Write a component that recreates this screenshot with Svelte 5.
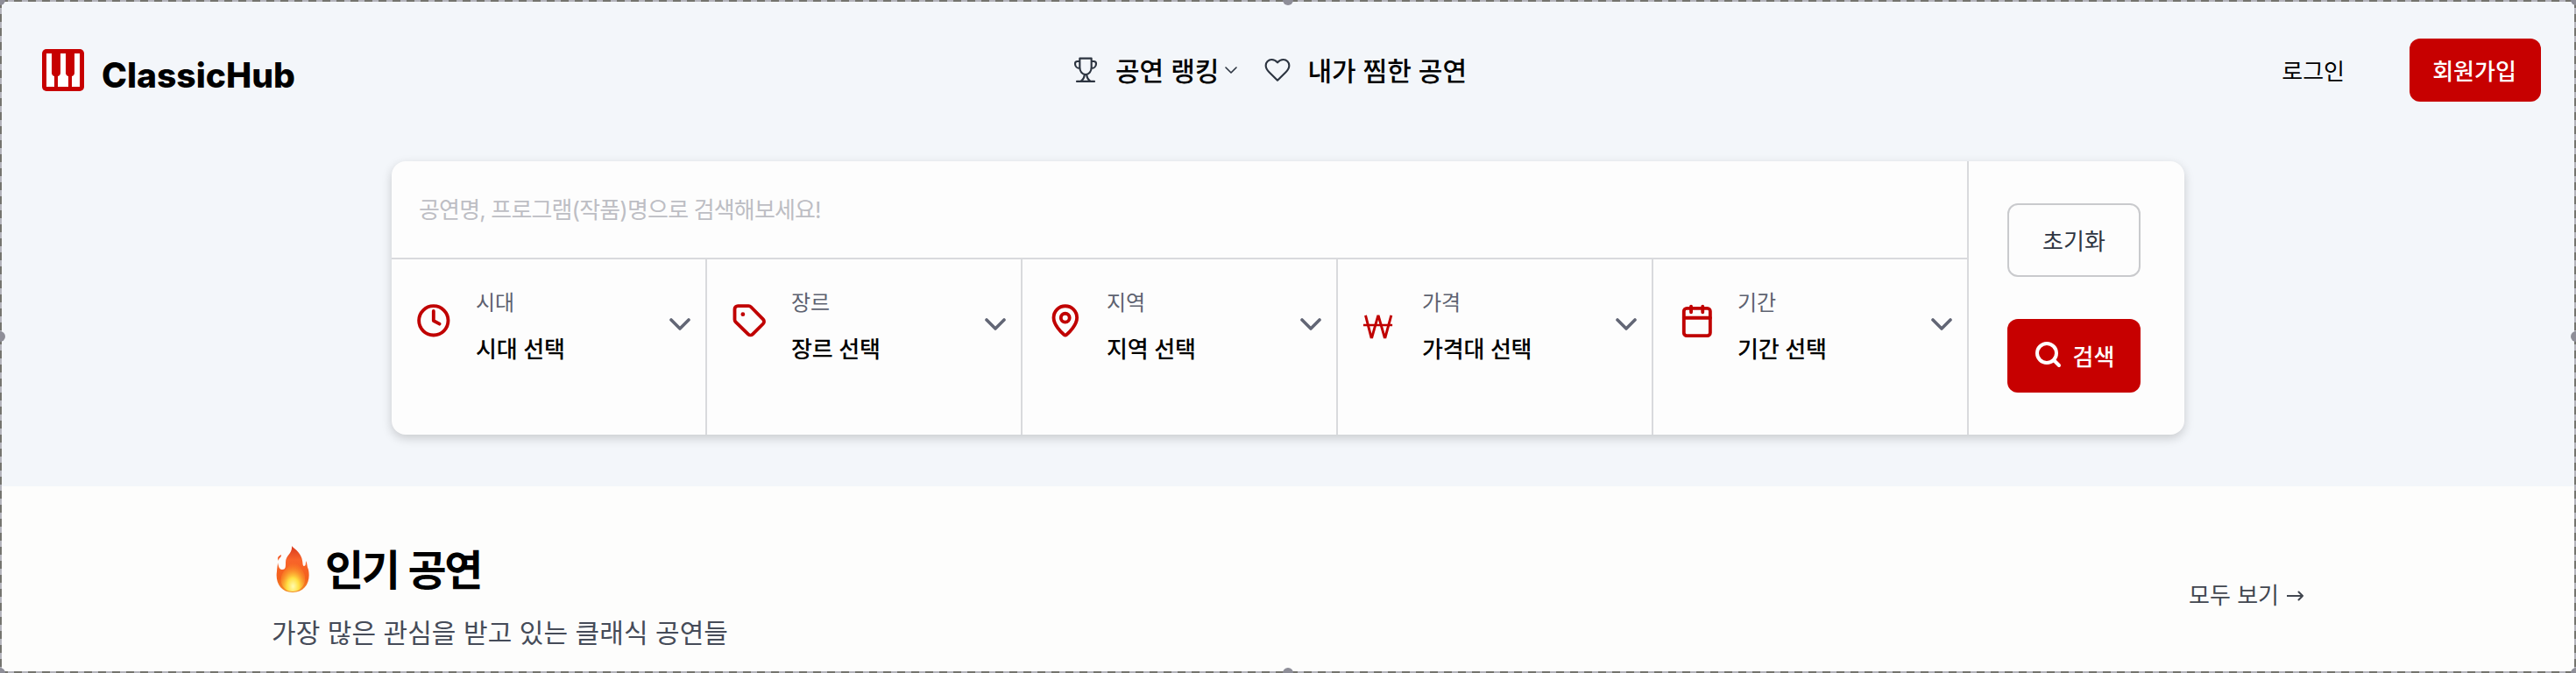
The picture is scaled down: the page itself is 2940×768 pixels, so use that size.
<script lang="ts">
  type IconName = 'clock' | 'tag' | 'pin' | 'won' | 'calendar';

  interface Filter {
    icon: IconName;
    label: string;
    value: string;
  }

  const filters: Filter[] = [
    { icon: 'clock', label: '시대', value: '시대 선택' },
    { icon: 'tag', label: '장르', value: '장르 선택' },
    { icon: 'pin', label: '지역', value: '지역 선택' },
    { icon: 'won', label: '가격', value: '가격대 선택' },
    { icon: 'calendar', label: '기간', value: '기간 선택' },
  ];

  const handles = ['nw', 'n', 'ne', 'w', 'e', 'sw', 's', 'se'];

  let keyword = $state('');
</script>

<div class="page">
  <div class="hero">
    <header>
      <a class="logo" href="#top">
        <svg width="48" height="48" viewBox="0 0 48 48">
          <rect width="48" height="48" rx="5" fill="#c70000" />
          <path
            d="M5 5h6v22q0 3 3 4v12H5zM21 5h6v22q0 3 3 4v12H18V31q3-1 3-4zM37 5h6v38h-9V31q3-1 3-4z"
            fill="#fff"
          />
        </svg>
        <span>ClassicHub</span>
      </a>

      <nav>
        <a class="rank" href="#ranking">
          <svg class="line" width="32" height="32" viewBox="0 0 24 24">
            <path d="M7 2h10v7.500c0 3.500-2 6.300-5 6.300s-5-2.800-5-6.300zM7 4.500H5a2 2 0 0 0-2 2c0 2.500 1.800 4 4 4M17 4.500h2a2 2 0 0 1 2 2c0 2.500-1.800 4-4 4M11 16c0 2.500-1 4-3 5.500M13 16c0 2.500 1 4 3 5.500M4.500 21.700h15" />
          </svg>
          <span>공연 랭킹</span>
          <svg class="caret" width="14" height="8" viewBox="0 0 14 8">
            <path d="M1 1l6 6 6-6" />
          </svg>
        </a>
        <a class="liked" href="#liked">
          <svg class="line" width="32" height="32" viewBox="0 0 24 24">
            <path d="M12 20.800l-7-7C2.500 11.300 2 9.800 2 8a5 5 0 0 1 5-5c2.200 0 3.700 1 5 2.500C13.300 4 14.800 3 17 3a5 5 0 0 1 5 5c0 1.800-.5 3.300-3 5.800z" />
          </svg>
          <span>내가 찜한 공연</span>
        </a>
      </nav>

      <div class="account">
        <a class="login" href="#login">로그인</a>
        <button type="button" class="primary signup">회원가입</button>
      </div>
    </header>

    <form class="search">
      <div class="fields">
        <input type="text" placeholder="공연명, 프로그램(작품)명으로 검색해보세요!" bind:value={keyword} />
        <div class="filters">
          {#each filters as filter (filter.icon)}
            <div class="filter">
              <svg class="icon" width="44" height="44" viewBox="0 0 24 24">
                {#if filter.icon === 'clock'}
                  <circle cx="11.900" cy="11.900" r="9.100" />
                  <path d="M11.900 6V12l3.700 2" />
                {:else if filter.icon === 'tag'}
                  <path d="M5 2.800h6.700a2 2 0 0 1 1.400.6l7.600 7.700a2 2 0 0 1 0 2.800l-6.500 6.500a2 2 0 0 1-2.800 0l-7.800-7.700A2 2 0 0 1 3 11.300V4.800a2 2 0 0 1 2-2z" />
                  <circle class="dot" cx="8.100" cy="8" r="1.300" />
                {:else if filter.icon === 'pin'}
                  <path d="M19.700 10.100c0 4.500-4.800 9.200-6.500 10.600a1.200 1.200 0 0 1-1.500 0c-1.700-1.400-6.500-6.100-6.500-10.600a7.250 7.250 0 0 1 14.500 0z" />
                  <circle cx="12.400" cy="10.200" r="2.700" />
                {:else if filter.icon === 'won'}
                  <path class="won" d="M3 8.700l3.500 13.500h.5l3.700-13h.4l3.700 13h.5L19 8.700" />
                  <path class="bar" d="M1.600 14.700h18.100" />
                {:else}
                  <rect x="4.800" y="4.300" width="16.400" height="17" rx="1.800" />
                  <path d="M9.300 3.100v3.600M16.500 3.100v3.600M4.800 10.200h16.400" />
                {/if}
              </svg>
              <div class="choice">
                <span class="label">{filter.label}</span>
                <span class="value">{filter.value}</span>
              </div>
              <svg class="chevron" width="24" height="14" viewBox="0 0 24 14">
                <path d="M2 2l10 10L22 2" />
              </svg>
            </div>
          {/each}
        </div>
      </div>
      <div class="actions">
        <button type="reset" class="reset">초기화</button>
        <button type="button" class="primary submit">
          <svg width="32" height="32" viewBox="0 0 32 32">
            <circle cx="15" cy="14" r="11" />
            <path d="M23 22l6 6" />
          </svg>
          <span>검색</span>
        </button>
      </div>
    </form>
  </div>

  <section>
    <div>
      <h2>
        <svg width="40" height="56" viewBox="0 0 40 56">
          <defs>
            <linearGradient id="flame" x1="0" y1="0" x2="0" y2="1">
              <stop offset="0" stop-color="#d9381e" />
              <stop offset="0.3" stop-color="#f8642a" />
              <stop offset="0.7" stop-color="#f4611c" />
              <stop offset="1" stop-color="#f2912a" />
            </linearGradient>
            <radialGradient id="core" cx="0.5" cy="0.85" r="0.7">
              <stop offset="0" stop-color="#fffbb0" />
              <stop offset="0.35" stop-color="#ffe043" />
              <stop offset="1" stop-color="#ff8a25" stop-opacity="0" />
            </radialGradient>
          </defs>
          <path
            d="M18 1c1 2 8 5 11 13 2 5 1 10 3 10 2 0 2-3 2-6 2 3 1 6 3 10 3 14-4 26-18 26S-1 42 1 30c0-4 1-7 1-10 1 5 2 8 5 8 4 0 4-3 4-8 0-9 8-10 7-19zM6 11c0 4-3 3-3 7-2-3-1-5 3-7z"
            fill="url(#flame)"
          />
          <path d="M19 14c3 7 10 10 13 18 4 10-2 21-13 21S3 42 7 33c3-6 11-10 12-19z" fill="url(#core)" />
        </svg>
        <span>인기 공연</span>
      </h2>
      <p>가장 많은 관심을 받고 있는 클래식 공연들</p>
    </div>
    <a class="more" href="#all">
      모두 보기
      <svg width="20" height="12" viewBox="0 0 20 12">
        <path d="M0 6h18M13.500 1.500L18 6l-4.500 4.500" />
      </svg>
    </a>
  </section>

  <div class="frame">
    {#each handles as handle (handle)}
      <i class={handle}></i>
    {/each}
  </div>
</div>

<style>
  :global(body) {
    margin: 0;
    overflow: hidden;
  }

  .page {
    position: relative;
    height: 768px;
    overflow: hidden;
    background: #fdfdfc;
    color: #000;
    font-family: Inter, 'Noto Sans CJK KR', sans-serif;
  }

  .page * {
    box-sizing: border-box;
  }

  svg {
    display: block;
    flex: none;
    fill: none;
    stroke-linecap: round;
    stroke-linejoin: round;
  }

  a {
    color: inherit;
    text-decoration: none;
  }

  button,
  input {
    padding: 0;
    border: 0;
    background: none;
    font: inherit;
  }

  .hero {
    height: 555px;
    background: #f3f6fa;
  }

  header {
    display: grid;
    grid-template-columns: 1175px auto 1fr;
    align-items: center;
    height: 184px;
    padding: 0 40px 24px 48px;
  }

  .logo {
    display: flex;
    align-items: center;
    gap: 20px;
    font-size: 39px;
    font-weight: 800;
  }

  .logo span {
    padding-top: 11px;
  }

  nav {
    display: flex;
    gap: 30px;
    font-size: 30px;
    font-weight: 500;
  }

  nav a {
    display: flex;
    align-items: center;
  }

  nav span {
    padding-bottom: 2px;
  }

  nav .line {
    margin-right: 18px;
    stroke: #2c3440;
    stroke-width: 1.6;
  }

  .caret {
    margin-left: 7px;
    stroke: #2c3440;
    stroke-width: 1.6;
  }

  .account {
    display: flex;
    align-items: center;
    justify-content: flex-end;
    gap: 74px;
    font-size: 26px;
  }

  .login {
    padding-bottom: 2px;
  }

  .primary {
    border-radius: 12px;
    background: #c70000;
    color: #fff;
    font-weight: 500;
  }

  .signup {
    width: 150px;
    height: 72px;
    padding: 0 2px 2px 0;
  }

  .search {
    display: flex;
    width: 2046px;
    height: 312px;
    margin: 0 0 0 447px;
    border-radius: 16px;
    background: #fdfdfd;
    box-shadow: 0 4px 12px rgb(0 0 0 / 18%);
  }

  .fields {
    display: flex;
    flex-direction: column;
    width: 1800px;
    border-right: 2px solid #d9dadd;
  }

  input {
    height: 112px;
    padding: 0 31px;
    border-bottom: 2px solid #d9dadd;
    font-size: 26px;
    letter-spacing: -0.85px;
    outline: none;
  }

  input::placeholder {
    color: #bdbec4;
    opacity: 1;
  }

  .filters {
    display: grid;
    flex: 1;
    grid-template-columns: repeat(5, 360px);
  }

  .filter {
    display: flex;
    align-items: flex-start;
    padding: 31px 17px 0 26px;
    border-right: 2px solid #d9dadd;
  }

  .filter:last-child {
    padding-right: 19px;
    border-right: 0;
  }

  .icon {
    margin-top: 17px;
    stroke: #c00000;
    stroke-width: 2.1;
  }

  .icon .dot {
    fill: #c00000;
    stroke: none;
  }

  .icon .won {
    stroke-linecap: butt;
    stroke-linejoin: miter;
    stroke-width: 1.6;
  }

  .icon .bar {
    stroke-linecap: butt;
    stroke-width: 1.3;
  }

  .choice {
    display: flex;
    flex: 1;
    flex-direction: column;
    gap: 14px;
    padding-left: 26px;
  }

  .label {
    color: #5d6270;
    font-size: 24px;
    line-height: 38px;
  }

  .value {
    font-size: 26px;
    font-weight: 500;
    letter-spacing: -0.2px;
    line-height: 40px;
  }

  .chevron {
    margin-top: 36px;
    stroke: #626675;
    stroke-width: 3.6;
  }

  .actions {
    display: flex;
    flex-direction: column;
    gap: 48px;
    padding: 48px 0 0 44px;
    font-size: 26px;
  }

  .actions button {
    display: flex;
    align-items: center;
    justify-content: center;
    width: 152px;
    height: 84px;
    padding-bottom: 2px;
    border-radius: 12px;
  }

  .actions .reset {
    border: 2px solid #c9cacd;
    color: #2f3542;
  }

  .submit {
    gap: 13px;
  }

  .submit svg {
    stroke: #fff;
    stroke-width: 4;
  }

  section {
    display: flex;
    justify-content: space-between;
    padding: 61px 310px 0 310px;
  }

  h2 {
    display: flex;
    align-items: center;
    gap: 16px;
    margin: 0;
    padding-left: 5px;
    font-size: 48px;
    font-weight: 700;
    letter-spacing: -2.4px;
    line-height: 70px;
    word-spacing: 2px;
  }

  h2 svg {
    margin-top: -2px;
  }

  p {
    margin: 14px 0 0;
    color: #454b58;
    font-size: 30px;
    letter-spacing: 0.05px;
    line-height: 44px;
  }

  .more {
    display: flex;
    align-items: center;
    align-self: flex-start;
    gap: 9px;
    margin-top: 44px;
    color: #41464f;
    font-size: 26px;
    line-height: 40px;
  }

  .more svg {
    stroke: #41464f;
    stroke-width: 2;
  }

  /* selection outline with its resize handles */
  .frame {
    --dash-x: repeating-linear-gradient(90deg, #74746e 0 9px, #b4b4bc 9px 16px);
    --dash-y: repeating-linear-gradient(180deg, #74746e 0 9px, #b4b4bc 9px 16px);
    position: absolute;
    inset: 0;
    background:
      var(--dash-x) top / 100% 2px no-repeat,
      var(--dash-x) bottom / 100% 2px no-repeat,
      var(--dash-y) left / 2px 100% no-repeat,
      var(--dash-y) right / 2px 100% no-repeat;
    pointer-events: none;
  }

  .frame i {
    position: absolute;
    width: 12px;
    height: 12px;
    border-radius: 50%;
    background: #8e8e98;
  }

  .nw, .n, .ne { top: -6px; }
  .sw, .s, .se { bottom: -6px; }
  .nw, .w, .sw { left: -6px; }
  .ne, .e, .se { right: -6px; }
  .n, .s { left: calc(50% - 6px); }
  .w, .e { top: calc(50% - 6px); }
</style>
